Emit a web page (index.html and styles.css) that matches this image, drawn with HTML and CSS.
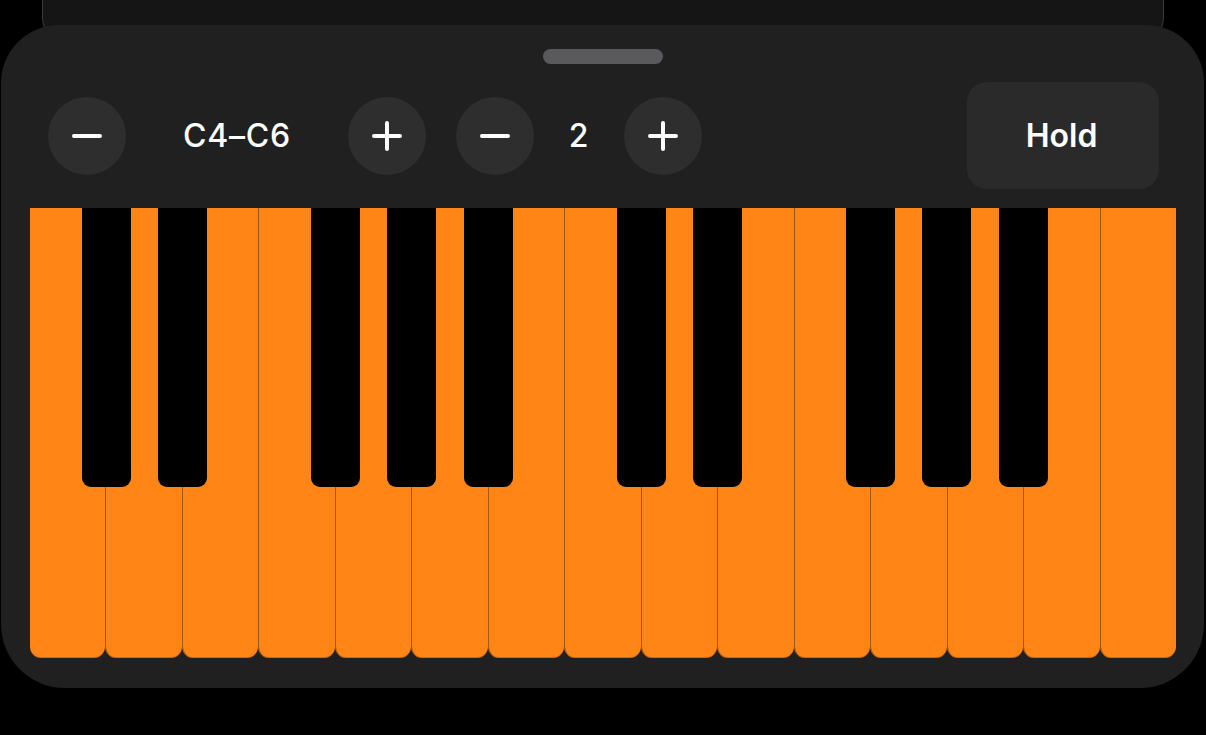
FILE: index.html
```html
<!DOCTYPE html>
<html lang="en">
<head>
<meta charset="utf-8">
<title>Keyboard</title>
<link rel="stylesheet" href="styles.css">
</head>
<body>
<div class="back-card"></div>
<section class="sheet">
  <div class="grabber"></div>
  <div class="controls">
    <button class="round-btn" aria-label="Decrease range">
      <svg viewBox="0 0 30 30" width="30" height="30"><path d="M2 15H28" /></svg>
    </button>
    <div class="value range">C4–C6</div>
    <button class="round-btn" aria-label="Increase range">
      <svg viewBox="0 0 30 30" width="30" height="30"><path d="M2 15H28M15 2V28" /></svg>
    </button>
    <button class="round-btn second" aria-label="Decrease">
      <svg viewBox="0 0 30 30" width="30" height="30"><path d="M2 15H28" /></svg>
    </button>
    <div class="value count">2</div>
    <button class="round-btn" aria-label="Increase">
      <svg viewBox="0 0 30 30" width="30" height="30"><path d="M2 15H28M15 2V28" /></svg>
    </button>
    <div class="spacer"></div>
    <button class="hold-btn">Hold</button>
  </div>
  <div class="keyboard">
    <div class="white"></div><div class="white"></div><div class="white"></div><div class="white"></div><div class="white"></div>
    <div class="white"></div><div class="white"></div><div class="white"></div><div class="white"></div><div class="white"></div>
    <div class="white"></div><div class="white"></div><div class="white"></div><div class="white"></div><div class="white"></div>
    <div class="black" style="left: calc(6.6667% - 24.5px)"></div>
    <div class="black" style="left: calc(13.3333% - 24.5px)"></div>
    <div class="black" style="left: calc(26.6667% - 24.5px)"></div>
    <div class="black" style="left: calc(33.3333% - 24.5px)"></div>
    <div class="black" style="left: calc(40% - 24.5px)"></div>
    <div class="black" style="left: calc(53.3333% - 24.5px)"></div>
    <div class="black" style="left: calc(60% - 24.5px)"></div>
    <div class="black" style="left: calc(73.3333% - 24.5px)"></div>
    <div class="black" style="left: calc(80% - 24.5px)"></div>
    <div class="black" style="left: calc(86.6667% - 24.5px)"></div>
  </div>
</section>
</body>
</html>
```

FILE: styles.css
```css
* { box-sizing: border-box; }

html, body {
  margin: 0;
  padding: 0;
  background: #000;
  width: 1206px;
  height: 735px;
  overflow: hidden;
  font-family: Inter, "Liberation Sans", sans-serif;
}

.back-card {
  height: 45px;
  margin: -5px 42px 0 42px;
  background: #151515;
  border: 1.5px solid #3a3a3a;
  border-top: none;
  border-radius: 0 0 22px 22px;
}

.sheet {
  position: relative;
  margin: -15px 2px 0 1px;
  height: 663px;
  background: #202020;
  border-radius: 58px 58px 64px 64px;
  padding: 24px 0 30px;
  display: flex;
  flex-direction: column;
}

.grabber {
  align-self: center;
  width: 120px;
  height: 15px;
  border-radius: 8px;
  background: #5a5a5c;
  margin-left: 1px;
}

.controls {
  display: flex;
  align-items: center;
  height: 107px;
  margin: 18px 45px 19px 47px;
}

.round-btn {
  width: 78px;
  height: 78px;
  border-radius: 50%;
  border: none;
  background: #2e2e2e;
  display: flex;
  align-items: center;
  justify-content: center;
  padding: 0;
  flex: none;
}

.round-btn svg path {
  stroke: #fff;
  stroke-width: 4;
  stroke-linecap: round;
  fill: none;
}

.round-btn.second { margin-left: 30px; }

.value {
  color: #fff;
  font-size: 32px;
  font-weight: 500;
  text-align: center;
  letter-spacing: 0.8px;
}

.range { width: 222px; }
.count { width: 90px; }

.spacer { flex: 1; }

.hold-btn {
  width: 192px;
  height: 107px;
  border: none;
  border-radius: 20px;
  background: #2a2a2a;
  color: #fff;
  font-family: Inter, "Liberation Sans", sans-serif;
  font-size: 32px;
  font-weight: 600;
  padding: 0;
  text-indent: -3px;
}

.keyboard {
  position: relative;
  display: flex;
  height: 450px;
  margin: 0 28px 0 29px;
}

.white {
  flex: 1;
  background: #ff8616;
  border-radius: 0 0 11px 11px;
  box-shadow: inset 0 -1px 0 rgba(120, 60, 0, 0.35);
}

.white + .white {
  border-left: 1px solid #a8570e;
}

.black {
  position: absolute;
  top: 0;
  width: 49px;
  height: 279px;
  background: #000;
  border-radius: 0 0 9px 9px;
}
```
